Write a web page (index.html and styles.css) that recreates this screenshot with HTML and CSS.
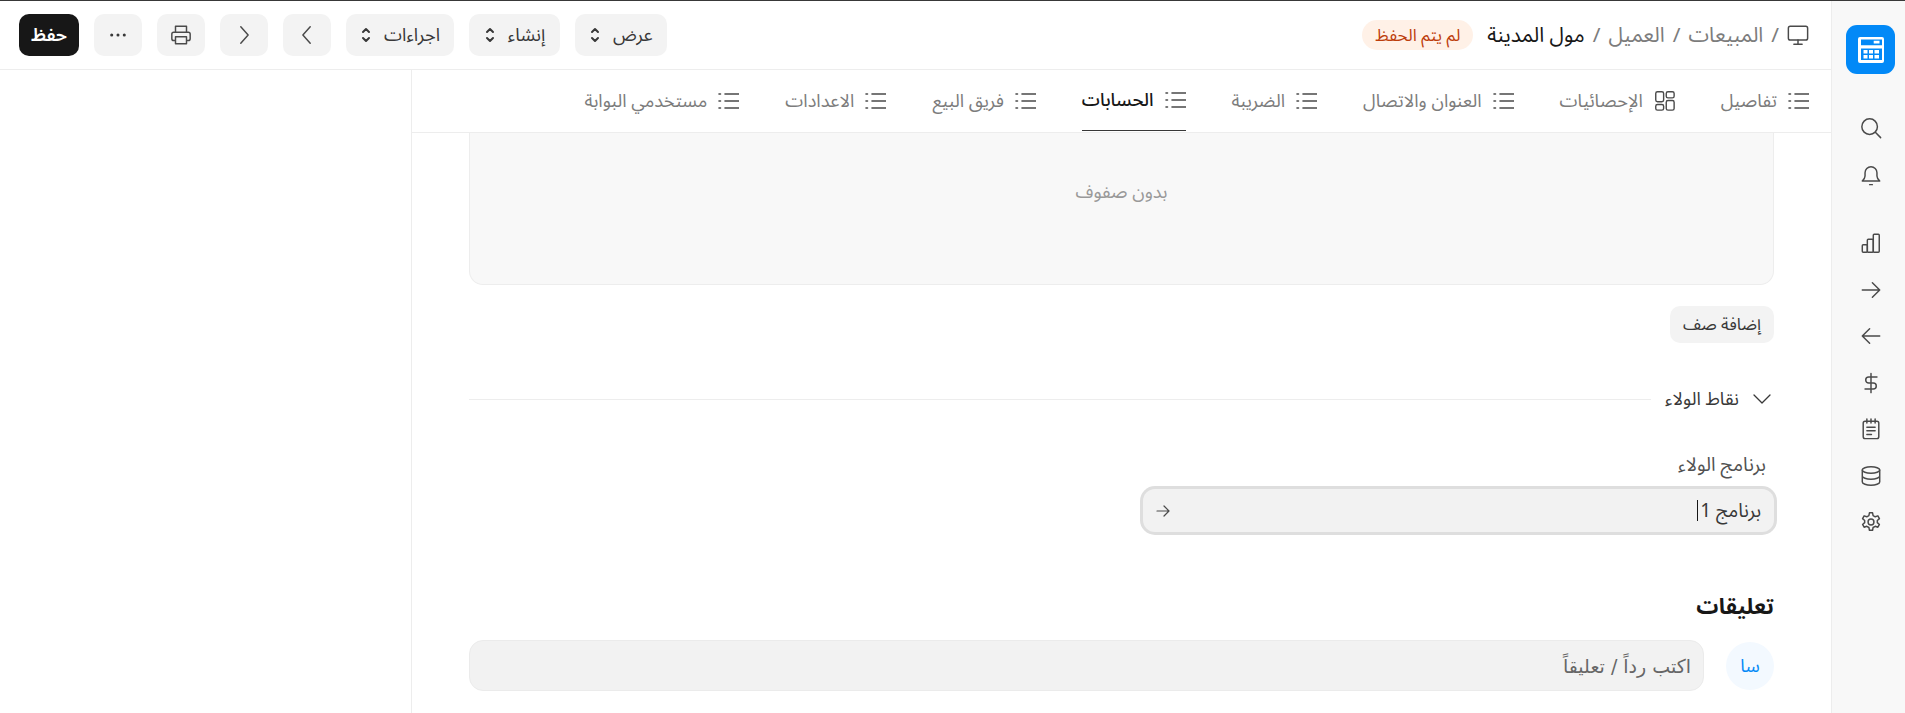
FILE: index.html
```html
<!DOCTYPE html>
<html lang="ar" dir="rtl">
<head>
<meta charset="utf-8">
<title>مول المدينة</title>
<link rel="stylesheet" href="styles.css">
</head>
<body>
<svg class="defs" width="0" height="0" aria-hidden="true">
  <symbol id="i-list" viewBox="0 0 21 18"><path d="M1 2h1.500M1 9h1.500M1 16h1.500M7 2h14M7 9h14M7 16h14"/></symbol>
  <symbol id="i-dash" viewBox="0 0 24 24"><rect x="2" y="2" width="9" height="11.500" rx="2"/><rect x="14" y="2" width="9" height="7" rx="2"/><rect x="14" y="12" width="9" height="11" rx="2"/><rect x="2" y="16.500" width="9" height="6.500" rx="2"/></symbol>
  <symbol id="i-ud" viewBox="0 0 12 20"><path d="M3 7l3-3 3 3M3 13l3 3 3-3"/></symbol>
</svg>
<div class="app">
  <aside class="rail">
    <div class="logo">
      <svg class="logo-mark" viewBox="0 0 28 28" width="28" height="28"><path fill-rule="evenodd" d="M3 1h22a2 2 0 0 1 2 2v22a2 2 0 0 1-2 2h-22a2 2 0 0 1-2-2v-22a2 2 0 0 1 2-2zM4 3.500v5.800h21v-5.800zM16.700 4.700h5.800v2.800h-5.800zM4 12.500v11.500h21v-11.500zM6.500 14h4v3.500h-4zM12 14h4v3.500h-4zM17.500 14h4.500v3.500h-4.500zM6.500 19h4v3.500h-4zM12 19h4v3.500h-4zM17.500 19h4.500v3.500h-4.500z"/></svg>
    </div>
    <div class="rail-group first">
      <span class="rail-btn"><svg class="ico" viewBox="0 0 24 24"><circle cx="10.500" cy="10.500" r="8.500"/><path d="M17 17l5.500 5.500"/></svg></span>
      <span class="rail-btn"><svg class="ico" viewBox="0 0 24 24"><path d="M2.500 18.500c1.500-1.500 3-3 3-5.500v-3.500a6.500 6.500 0 0 1 13 0v3.500c0 2.500 1.500 4 3 5.500zM10.500 22.500h3"/></svg></span>
    </div>
    <div class="rail-group">
      <span class="rail-btn"><svg class="ico" viewBox="0 0 24 24"><rect x="2.500" y="14" width="5.500" height="8" rx="1"/><rect x="8" y="8" width="6.500" height="14" rx="1"/><rect x="14.500" y="2.500" width="6.500" height="19.500" rx="1"/></svg></span>
      <span class="rail-btn"><svg class="ico" viewBox="0 0 24 24"><path d="M2.500 12h19M13.500 4l8 8-8 8"/></svg></span>
      <span class="rail-btn"><svg class="ico" viewBox="0 0 24 24"><path d="M21.500 12h-19M10.500 4l-8 8 8 8"/></svg></span>
      <span class="rail-btn"><svg class="ico" viewBox="0 0 24 24"><path d="M12 1.500v21M18.500 5.500h-9a3.250 3.250 0 0 0 0 6.500h5a3.250 3.250 0 0 1 0 6.500h-9"/></svg></span>
      <span class="rail-btn"><svg class="ico" viewBox="0 0 24 24"><rect x="3.500" y="3.500" width="17" height="19" rx="2"/><path d="M7.500 1v4.500M12 1v4.500M16.500 1v4.500M7.500 10h9M7.500 14h9M7.500 18h5"/></svg></span>
      <span class="rail-btn"><svg class="ico" viewBox="0 0 24 24"><ellipse cx="12" cy="5.500" rx="9.500" ry="3.500"/><path d="M2.500 5.500v13c0 2 4.500 3.500 9.500 3.500s9.500-1.500 9.500-3.500v-13M2.500 12c0 2 4.500 3.500 9.500 3.500s9.500-1.500 9.500-3.500"/></svg></span>
      <span class="rail-btn"><svg class="ico" viewBox="0 0 24 24"><circle cx="12" cy="12" r="3.200"/><path d="M10.300 2h3.400l.6 3 2.300 1.300 2.900-1 1.700 3-2.300 2v2.400l2.300 2-1.700 3-2.900-1-2.300 1.300-.6 3h-3.400l-.6-3-2.300-1.300-2.900 1-1.700-3 2.300-2v-2.400l-2.300-2 1.700-3 2.900 1 2.300-1.300z"/></svg></span>
    </div>
  </aside>
  <div class="main">
    <header class="topbar">
      <div class="crumbs">
        <svg class="ico" viewBox="0 0 24 24"><rect x="1.500" y="2.500" width="21" height="15" rx="2"/><path d="M12 17.500v4.500M7.500 22h9"/></svg>
        <span class="sep">/</span><a class="crumb">المبيعات</a>
        <span class="sep">/</span><a class="crumb">العميل</a>
        <span class="sep">/</span><span class="crumb-current">مول المدينة</span>
        <span class="badge">لم يتم الحفظ</span>
      </div>
      <div class="actions">
        <button class="btn">عرض <svg class="ud"><use href="#i-ud"/></svg></button>
        <button class="btn">إنشاء <svg class="ud"><use href="#i-ud"/></svg></button>
        <button class="btn">اجراءات <svg class="ud"><use href="#i-ud"/></svg></button>
        <button class="btn square"><svg class="ico" viewBox="0 0 24 24"><path d="M15.500 3l-8 9 8 9"/></svg></button>
        <button class="btn square"><svg class="ico" viewBox="0 0 24 24"><path d="M8.500 3l8 9-8 9"/></svg></button>
        <button class="btn square"><svg class="ico" viewBox="0 0 24 24"><path d="M6 9V2.500h12V9M6 18H4a2 2 0 0 1-2-2v-5a2 2 0 0 1 2-2h16a2 2 0 0 1 2 2v5a2 2 0 0 1-2 2h-2M6 14h12v7.500H6z"/></svg></button>
        <button class="btn square"><svg class="dots" viewBox="0 0 20 4"><circle cx="3" cy="2" r="1.700"/><circle cx="10" cy="2" r="1.700"/><circle cx="17" cy="2" r="1.700"/></svg></button>
        <button class="btn primary">حفظ</button>
      </div>
    </header>
    <div class="body">
      <div class="form">
        <nav class="tabs">
          <a class="tab"><svg class="ico-list"><use href="#i-list"/></svg>تفاصيل</a>
          <a class="tab"><svg class="ico"><use href="#i-dash"/></svg>الإحصائيات</a>
          <a class="tab"><svg class="ico-list"><use href="#i-list"/></svg>العنوان والاتصال</a>
          <a class="tab"><svg class="ico-list"><use href="#i-list"/></svg>الضريبة</a>
          <a class="tab active"><svg class="ico-list"><use href="#i-list"/></svg>الحسابات</a>
          <a class="tab"><svg class="ico-list"><use href="#i-list"/></svg>فريق البيع</a>
          <a class="tab"><svg class="ico-list"><use href="#i-list"/></svg>الاعدادات</a>
          <a class="tab"><svg class="ico-list"><use href="#i-list"/></svg>مستخدمي البوابة</a>
        </nav>
        <div class="content">
          <div class="grid-empty">بدون صفوف</div>
          <button class="btn small">إضافة صف</button>
          <div class="section-head">
            <svg class="chev" viewBox="0 0 18 10"><path d="M1 1l8 8 8-8"/></svg>
            <span class="section-title">نقاط الولاء</span>
            <span class="rule"></span>
          </div>
          <div class="fields">
            <div class="field">
              <label class="label">برنامج الولاء</label>
              <div class="input focus">
                <span class="value">برنامج 1</span><span class="caret"></span>
                <svg class="link-arrow" viewBox="0 0 14 12"><path d="M1 6h12M8 1l5 5-5 5"/></svg>
              </div>
            </div>
          </div>
          <h3 class="comments-title">تعليقات</h3>
          <div class="comment-row">
            <span class="avatar">سا</span>
            <div class="comment-box">اكتب رداً / تعليقاً</div>
          </div>
        </div>
      </div>
    </div>
  </div>
</div>
</body>
</html>
```
FILE: styles.css
```css
* { box-sizing: border-box; }
html, body { margin: 0; height: 100%; overflow: hidden; background: #fff; }
body { font-family: "Noto Sans Arabic", "Noto Sans", Inter, sans-serif; font-size: 18.200px; color: #171717; border-top: 1px solid #383838; }
.defs { position: absolute; }
svg { fill: none; stroke: #4a4a4a; stroke-width: 1.600; stroke-linecap: round; stroke-linejoin: round; flex: none; }
.ico { width: 22px; height: 22px; }
.ico-list { width: 21px; height: 18px; }
.ud { width: 12px; height: 20px; stroke: #383838; stroke-width: 2; }
.dots { width: 18px; height: 4px; fill: #383838; stroke: none; }

.app { display: flex; height: 712px; }
.rail { width: 74px; flex: none; background: #f8f8f8; border-inline-end: 1px solid #ededed; display: flex; flex-direction: column; align-items: center; padding: 24px 10px 0 14px; }
.logo { width: 49px; height: 49px; border-radius: 11px; background: #0289f7; display: flex; align-items: center; justify-content: center; }
.logo-mark { fill: #fff; stroke: none; }
.rail-group { display: flex; flex-direction: column; align-items: center; margin-top: 22px; }
.rail-group.first { margin-top: 31px; }
.rail-btn { height: 46.500px; display: flex; align-items: center; justify-content: center; }

.main { flex: 1; min-width: 0; display: flex; flex-direction: column; }
.topbar { height: 69px; flex: none; border-bottom: 1px solid #ededed; display: flex; align-items: center; justify-content: space-between; padding: 0 22px 0 19px; }
.crumbs { display: flex; align-items: center; gap: 8px; font-size: 20.800px; color: #7c7c7c; }
.crumb-current { color: #171717; }
.badge { margin-inline-start: 6px; height: 30px; padding: 0 13px; border-radius: 15px; background: #fff1e7; color: #bd3e0c; font-size: 16.900px; display: flex; align-items: center; }
.actions { display: flex; gap: 15px; }
.btn { font: inherit; height: 42px; min-width: 48px; border: 0; border-radius: 10px; background: #f3f3f3; color: #383838; padding: 0 14px; display: flex; align-items: center; justify-content: center; gap: 12px; font-size: 18.200px; }
.actions .btn { min-width: 91px; }
.actions .btn.square { width: 48px; min-width: 0; padding: 0; }
.actions .btn.primary { width: 60px; min-width: 0; padding: 0; background: #171717; color: #fff; font-weight: 600; }
.btn.small { height: 37px; padding: 0 13px; font-size: 16.900px; }

.body { flex: 1; min-height: 0; display: flex; }
.form { width: 1420px; border-inline-end: 1px solid #ededed; display: flex; flex-direction: column; min-height: 0; overflow: hidden; }
.tabs { height: 63px; flex: none; border-bottom: 1px solid #ededed; display: flex; gap: 46px; padding-inline-start: 22px; }
.tab { display: flex; align-items: center; gap: 11px; color: #7c7c7c; font-size: 18.200px; height: 61px; white-space: nowrap; }
.tab .ico { width: 21px; height: 21px; }
.tab.active { color: #171717; font-weight: 500; border-bottom: 1px solid #383838; }
.content { padding: 0 57px; display: flex; flex-direction: column; align-items: flex-start; }
.grid-empty { align-self: stretch; height: 152px; border: 1px solid #ededed; border-top: 0; border-radius: 0 0 14px 14px; background: #f8f8f8; color: #999; font-size: 18.200px; display: flex; align-items: center; justify-content: center; padding-bottom: 34px; }
.content > .btn.small { margin-top: 21px; }
.section-head { align-self: stretch; margin-top: 44px; display: flex; align-items: center; gap: 14px; height: 24px; font-size: 18.200px; }
.chev { width: 18px; height: 10px; margin-inline-start: 3px; stroke: #383838; stroke-width: 1.300; }
.section-title { color: #383838; }
.rule { flex: 1; height: 1px; background: #ededed; }
.fields { align-self: stretch; display: grid; grid-template-columns: 1fr 1fr; column-gap: 43px; margin-top: 41px; }
.label { display: block; font-size: 19.200px; color: #525252; padding-inline-start: 8px; height: 37px; line-height: 26px; }
.input { height: 43px; border-radius: 12px; background: #f2f2f2; box-shadow: 0 0 0 3px #dedede; display: flex; align-items: center; padding: 0 13px; font-size: 19px; color: #383838; }
.caret { width: 1px; height: 21px; background: #171717; margin-inline-start: 2px; }
.link-arrow { width: 14px; height: 12px; margin-inline-start: auto; stroke-width: 1.200; }
.comments-title { margin: 58px 0 0 0; font-size: 22px; font-weight: 700; line-height: 34px; }
.comment-row { align-self: stretch; margin-top: 16px; display: flex; align-items: center; gap: 22px; }
.avatar { width: 48px; height: 48px; border-radius: 50%; background: #f3f9ff; color: #0289f7; display: flex; align-items: center; justify-content: center; font-size: 18.200px; flex: none; }
.comment-box { flex: 1; height: 51px; border: 1px solid #ebebeb; border-radius: 14px; background: #f2f2f2; color: #666; font-family: "DejaVu Sans", sans-serif; font-size: 19px; display: flex; align-items: center; padding: 0 12px; }
```
